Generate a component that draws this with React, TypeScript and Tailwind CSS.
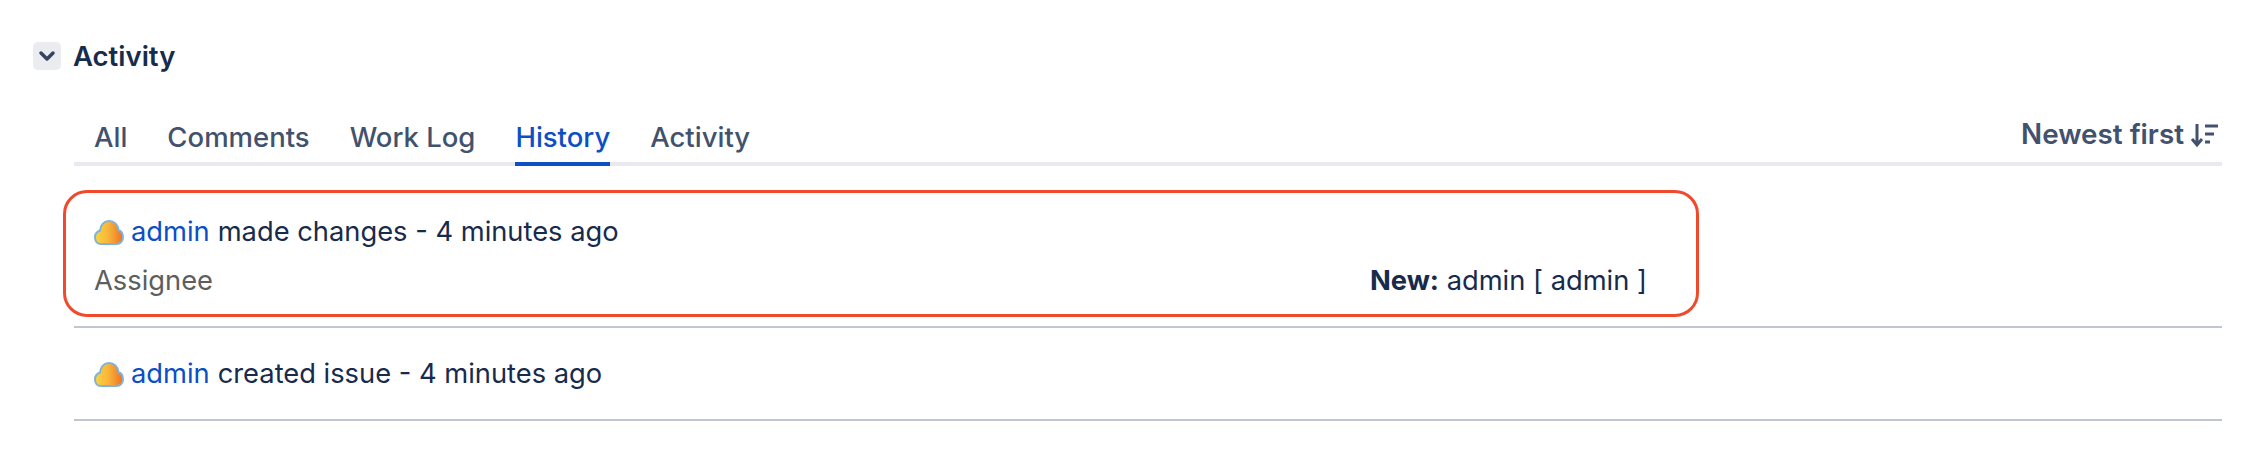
import { ChevronDown } from 'lucide-react';

const CloudAvatar = ({ id }: { id: string }) => (
  <svg width="30" height="27" viewBox="0 0 30 27" className="shrink-0">
    <defs>
      <linearGradient id={id} x1="0" y1="0" x2="1" y2="0">
        <stop offset="0" stopColor="#fbd63f" />
        <stop offset="0.5" stopColor="#f8b23a" />
        <stop offset="1" stopColor="#ee7024" />
      </linearGradient>
    </defs>
    <path
      d="M7 25C3 25 1 22 1 18.500 1 15 3 12.500 6 11.500 6.500 6 10 2 15 2c5 0 9 3.500 9.500 9 3 1 4.500 4 4.500 7.500 0 3.500-2.500 6.500-6.500 6.500z"
      fill={`url(#${id})`}
      stroke="#7fb2dd"
      strokeWidth="2"
    />
  </svg>
);

const tabs = ['All', 'Comments', 'Work Log', 'History', 'Activity'];

export default function App() {
  return (
    <div className="w-[2268px] h-[466px] bg-white font-['Inter',sans-serif] text-[27.3px] text-[#172b4d] overflow-hidden pt-[41px] pl-[33px] pr-[46px]">
      <div className="flex items-center gap-[12px] h-[30px]">
        <div className="w-[28px] h-[28px] rounded-[5px] bg-[#ebecf0] flex items-center justify-center text-[#344563]">
          <ChevronDown className="w-[24px] h-[24px]" strokeWidth={3.5} />
        </div>
        <h2 className="font-semibold text-[27.5px] leading-[30px]">Activity</h2>
      </div>

      <div className="ml-[41px] mt-[49px]">
        <div className="flex items-end justify-between border-b-[4px] border-[#e9e9f2] h-[46px]">
          <div className="flex gap-[40px] pl-[20px] text-[#42526e] font-medium text-[27.5px]">
            {tabs.map((t) =>
              t === 'History' ? (
                <div key={t} className="relative text-[#0c4fc4] h-[42px] leading-[34px]">
                  {t}
                  <div className="absolute left-0 right-0 -bottom-[4px] h-[4px] bg-[#0f4fc4]" />
                </div>
              ) : (
                <div key={t} className="h-[42px] leading-[34px]">{t}</div>
              )
            )}
          </div>
          <div className="flex items-center gap-[6px] h-[42px] pb-[12px] pr-[2px] font-semibold text-[#42526e] text-[27.8px]">
            Newest first
            <svg width="30" height="28" viewBox="0 0 30 28" fill="none" stroke="#42526e" strokeWidth="3">
              <path d="M7 3v21M2 18l5 6 5-6" />
              <path d="M15 5h13M15 13h9M15 21h5" />
            </svg>
          </div>
        </div>

        <div className="relative w-[1627px] -ml-[2px] mt-[24px] h-[127px] px-[22px] pt-[24px]">
          <div className="absolute -left-[9px] top-0 right-0 bottom-0 border-[3px] border-[#f04a2c] rounded-[24px]" />
          <div className="flex items-center h-[36px]">
            <CloudAvatar id="c1" />
            <span className="ml-[7px] text-[#0c4fc4]">admin</span>
            <span className="ml-[8px]">made changes - 4 minutes ago</span>
          </div>
          <div className="flex justify-between mt-[13px] h-[36px] items-center pr-[30px]">
            <span className="text-[#5e5e5e]">Assignee</span>
            <span>
              <b className="font-bold">New:</b> admin [ admin ]
            </span>
          </div>
        </div>
        <div className="border-b-[2px] border-[#c1c5d0] mt-[9px]" />
        <div className="h-[91px] flex items-center pl-[20px] pt-[2px]">
          <CloudAvatar id="c2" />
          <span className="ml-[7px] text-[#0c4fc4]">admin</span>
          <span className="ml-[8px]">created issue - 4 minutes ago</span>
        </div>
        <div className="border-b-[2px] border-[#c1c5d0]" />
      </div>
    </div>
  );
}
